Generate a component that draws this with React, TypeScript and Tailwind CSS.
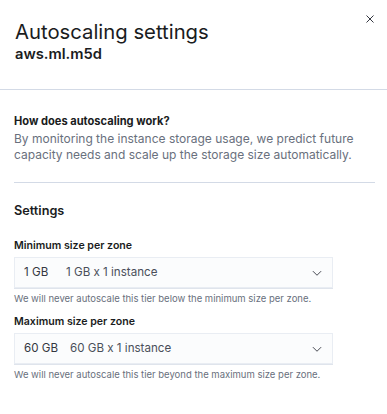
import React from "react";

function Chevron() {
  return (
    <svg width="12" height="12" viewBox="0 0 16 16" fill="none" className="text-[#343741]">
      <path d="M2.5 5.5 L8 11 L13.5 5.5" stroke="currentColor" strokeWidth="1.2" />
    </svg>
  );
}

function SelectField({
  label,
  value,
  valueWidth,
  desc,
  help,
}: {
  label: string;
  value: string;
  valueWidth: string;
  desc: string;
  help: string;
}) {
  return (
    <div className="flex flex-col">
      <div className="text-[10.6px] font-semibold text-[#1a1c21] leading-[14px] mb-[4px]">{label}</div>
      <div className="w-[319px] h-[31px] bg-[#fbfcfd] border border-[#e9edf3] shadow-[0_1px_0_#dfe4ec] flex items-center pl-[9px] pr-[9px]">
        <span className={`text-[11.6px] text-[#343741] ${valueWidth}`}>{value}</span>
        <span className="text-[11.6px] text-[#4a4f5a] flex-1">{desc}</span>
        <Chevron />
      </div>
      <div className="text-[9.5px] text-[#69707d] leading-[12px] mt-[5px]">{help}</div>
    </div>
  );
}

export default function App() {
  return (
    <div
      className="w-[387px] h-[414px] bg-white overflow-hidden relative"
      style={{ fontFamily: "Inter, 'Noto Sans', sans-serif" }}
    >
      <button className="absolute top-[13px] right-[11px] w-[12px] h-[12px] flex items-center justify-center text-[#343741]">
        <svg width="12" height="12" viewBox="0 0 12 12">
          <path d="M2.5 2.5 L9.5 9.5 M9.5 2.5 L2.5 9.5" stroke="currentColor" strokeWidth="1" />
        </svg>
      </button>
      <div className="px-[15px] pt-[20px] pb-[27px] border-b border-[#d3dae6]">
        <h1 className="text-[20.3px] leading-[24px] text-[#1a1c21] font-normal">Autoscaling settings</h1>
        <div className="text-[14.7px] font-semibold text-[#1a1c21] leading-[16px] mt-[2px]">aws.ml.m5d</div>
      </div>
      <div className="px-[14px] pt-[23px]">
        <div className="text-[11.1px] font-bold text-[#1a1c21] leading-[16px]">How does autoscaling work?</div>
        <p className="text-[12px] text-[#69707d] leading-[16px] mt-[2px]">
          By monitoring the instance storage usage, we predict future capacity needs and scale up the storage size automatically.
        </p>
        <div className="h-px bg-[#d3dae6] w-[361px] mt-[19px]" />
        <div className="text-[12.7px] font-semibold text-[#1a1c21] leading-[18px] mt-[19px]">Settings</div>
        <div className="mt-[19px] flex flex-col gap-[10px]">
          <SelectField
            label="Minimum size per zone"
            value="1 GB"
            valueWidth="w-[42px]"
            desc="1 GB x 1 instance"
            help="We will never autoscale this tier below the minimum size per zone."
          />
          <SelectField
            label="Maximum size per zone"
            value="60 GB"
            valueWidth="w-[46px]"
            desc="60 GB x 1 instance"
            help="We will never autoscale this tier beyond the maximum size per zone."
          />
        </div>
      </div>
    </div>
  );
}
